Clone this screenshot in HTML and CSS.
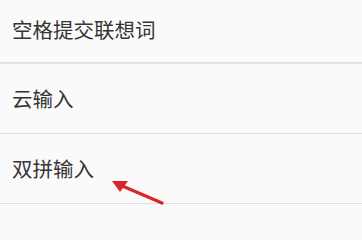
FILE: index.html
```html
<!DOCTYPE html>
<html lang="zh-CN">
<head>
<meta charset="utf-8">
<link rel="stylesheet" href="styles.css">
</head>
<body>
<div class="list">
  <div class="row row-first"><span class="label">空格提交联想词</span></div>
  <div class="row"><span class="label">云输入</span></div>
  <div class="row row-last"><span class="label">双拼输入</span></div>
  <svg class="arrow" width="60" height="30" viewBox="0 0 60 30">
    <line x1="51" y1="25" x2="9" y2="7" stroke="#d8262b" stroke-width="3.2" stroke-linecap="round"/>
    <polygon points="1,3 17,3 9,14" fill="#d8262b"/>
  </svg>
</div>
</body>
</html>
```
FILE: styles.css
```css
html, body {
  margin: 0;
  padding: 0;
  background: #fafafa;
}
body {
  width: 362px;
  height: 207px;
  overflow: hidden;
  font-family: "Noto Sans CJK SC", "Noto Sans", sans-serif;
}
.list {
  position: relative;
  display: flex;
  flex-direction: column;
}
.row {
  display: flex;
  align-items: center;
  height: 69px;
  padding-left: 12px;
  border-bottom: 1px solid #dedede;
  box-sizing: content-box;
}
.row-first {
  height: 58px;
  padding-bottom: 4px;
  border-bottom: 2px solid #e2e2e2;
}
.label {
  font-size: 20.5px;
  color: #353535;
  line-height: 1;
}
.arrow {
  position: absolute;
  left: 111px;
  top: 178px;
}
```
